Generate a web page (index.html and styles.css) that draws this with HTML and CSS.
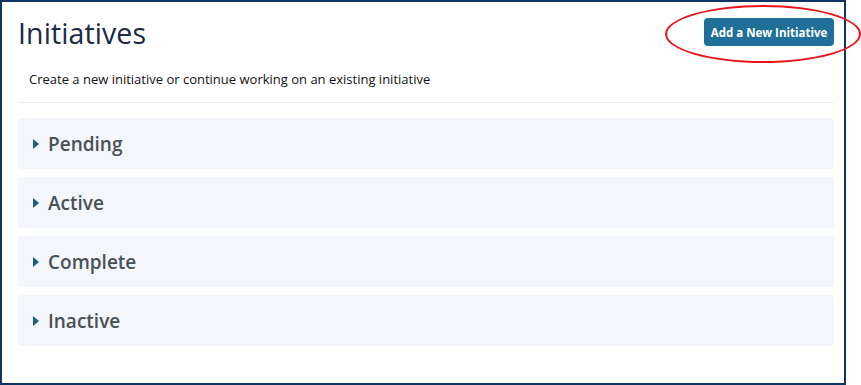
FILE: index.html
```html
<!DOCTYPE html>
<html>
<head>
<meta charset="utf-8">
<link rel="stylesheet" href="styles.css">
</head>
<body>
<div class="frame">
  <div class="header">
    <h1 class="title">Initiatives</h1>
    <button class="add-btn">Add a New Initiative</button>
  </div>
  <p class="subtitle">Create a new initiative or continue working on an existing initiative</p>
  <hr class="divider">
  <div class="sections">
    <div class="section"><span class="caret"></span><span class="label">Pending</span></div>
    <div class="section"><span class="caret"></span><span class="label">Active</span></div>
    <div class="section"><span class="caret"></span><span class="label">Complete</span></div>
    <div class="section"><span class="caret"></span><span class="label">Inactive</span></div>
  </div>
  <div class="highlight"></div>
</div>
</body>
</html>
```

FILE: styles.css
```css
html, body {
  margin: 0;
  padding: 0;
  background: #ffffff;
}
body {
  font-family: "Open Sans", "Noto Sans", sans-serif;
  width: 861px;
  height: 385px;
  overflow: hidden;
}
.frame {
  position: relative;
  box-sizing: border-box;
  width: 846px;
  height: 385px;
  border: 2px solid #0f3564;
  padding: 0 10px 0 16px;
}
.header {
  display: flex;
  justify-content: space-between;
  align-items: flex-start;
}
.title {
  margin: 12px 0 0 0;
  font-size: 28.5px;
  font-weight: 500;
  color: #1b2a47;
  line-height: 38px;
  letter-spacing: 0.1px;
}
.add-btn {
  margin-top: 16px;
  width: 130px;
  height: 28px;
  border: none;
  border-radius: 4px;
  background: #1f6f98;
  color: #ffffff;
  font-family: "Open Sans", "Noto Sans", sans-serif;
  font-weight: 700;
  font-size: 11.5px;
  padding: 0;
}
.subtitle {
  margin: 18px 0 0 11px;
  font-size: 13px;
  font-weight: 500;
  color: #111111;
  line-height: 18px;
}
.divider {
  margin: 14px 0 0 0;
  border: none;
  border-top: 1px solid #ececec;
  height: 0;
}
.sections {
  margin-top: 15px;
  display: flex;
  flex-direction: column;
  gap: 8px;
}
.section {
  height: 51px;
  background: #f3f6fa;
  border-radius: 4px;
  display: flex;
  align-items: center;
  padding-left: 15px;
}
.caret {
  width: 0;
  height: 0;
  border-top: 5px solid transparent;
  border-bottom: 5px solid transparent;
  border-left: 6px solid #1d5f82;
  margin-right: 9px;
}
.label {
  font-size: 19px;
  font-weight: 600;
  color: #485058;
  line-height: 24px;
}
.highlight {
  position: absolute;
  left: 663px;
  top: 3px;
  width: 196px;
  height: 58px;
  border: 2px solid #e8141a;
  border-radius: 50%;
  box-sizing: border-box;
}
```
